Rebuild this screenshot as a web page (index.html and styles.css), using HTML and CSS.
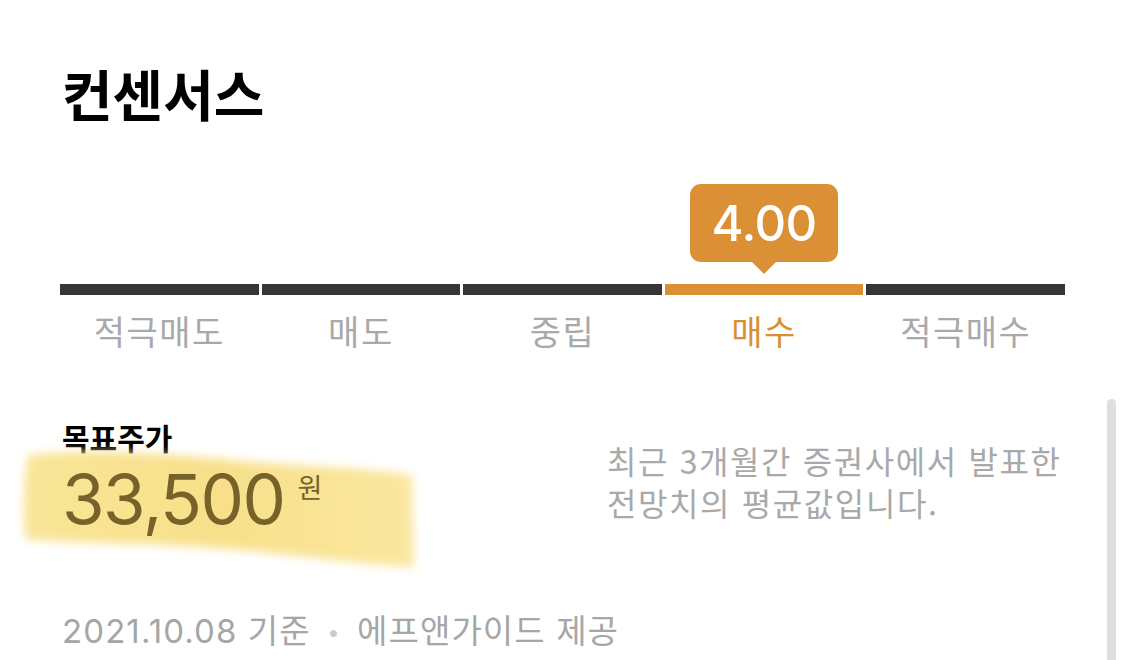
FILE: index.html
```html
<!DOCTYPE html>
<html lang="ko">
<head>
<meta charset="utf-8">
<link rel="stylesheet" href="styles.css">
</head>
<body>
<div class="page">
  <h1 class="title">컨센서스</h1>
  <div class="scale">
    <div class="tip-row">
      <div class="tip"><span>4.00</span></div>
    </div>
    <div class="bars">
      <div class="bar"></div>
      <div class="bar"></div>
      <div class="bar"></div>
      <div class="bar active"></div>
      <div class="bar"></div>
    </div>
    <div class="labels">
      <div class="label">적극매도</div>
      <div class="label">매도</div>
      <div class="label">중립</div>
      <div class="label active">매수</div>
      <div class="label">적극매수</div>
    </div>
  </div>
  <div class="target">
    <div class="target-left">
      <div class="target-title">목표주가</div>
      <div class="price-wrap">
        <svg class="highlight" width="440" height="150" viewBox="0 0 440 150" aria-hidden="true">
          <defs>
            <filter id="soft" x="-10%" y="-20%" width="120%" height="140%">
              <feGaussianBlur stdDeviation="5"/>
            </filter>
            <linearGradient id="hl" x1="0" y1="0" x2="1" y2="0">
              <stop offset="0" stop-color="#f9e598"/>
              <stop offset="0.5" stop-color="#f8e08a"/>
              <stop offset="1" stop-color="#fae7a0"/>
            </linearGradient>
          </defs>
          <path d="M28 16 C 90 10, 160 14, 240 22 C 320 28, 380 30, 412 36 L 414 128 C 360 126, 300 116, 230 110 C 150 104, 80 104, 26 101 C 22 70, 24 40, 28 16 Z" fill="url(#hl)" filter="url(#soft)"/>
        </svg>
        <span class="price">33,500</span><span class="unit">원</span>
      </div>
    </div>
    <p class="target-desc">최근 3개월간 증권사에서 발표한<br>전망치의 평균값입니다.</p>
  </div>
  <div class="source">2021.10.08 기준 <span class="dot">•</span> 에프앤가이드 제공</div>
</div>
<div class="scrollbar"></div>
</body>
</html>
```
FILE: styles.css
```css
* { box-sizing: border-box; }
html, body {
  margin: 0;
  padding: 0;
  background: #ffffff;
  overflow: hidden;
}
body {
  width: 1125px;
  height: 660px;
  position: relative;
  font-family: "Inter", "Noto Sans CJK KR", sans-serif;
}
.page {
  padding: 52px 60px 0 60px;
}
.title {
  margin: 0 0 0 2px;
  font-family: "Noto Sans CJK KR", sans-serif;
  font-weight: 700;
  font-size: 55px;
  line-height: 80px;
  color: #000;
  letter-spacing: 0;
}
.scale {
  margin-top: 52px;
  width: 1005px;
}
.tip-row {
  display: grid;
  grid-template-columns: repeat(5, 1fr);
  column-gap: 3px;
  height: 100px;
}
.tip {
  grid-column: 4;
  justify-self: center;
  position: relative;
  width: 148px;
  height: 78px;
  background: #db9035;
  border-radius: 11px;
  display: flex;
  align-items: center;
  justify-content: center;
}
.tip::after {
  content: "";
  position: absolute;
  left: 50%;
  bottom: -12px;
  margin-left: -13px;
  border-left: 13px solid transparent;
  border-right: 13px solid transparent;
  border-top: 13px solid #db9035;
}
.tip span {
  color: #fff;
  font-family: "Inter", sans-serif;
  font-size: 49px;
  font-weight: 500;
  letter-spacing: -0.5px;
}
.bars {
  display: grid;
  grid-template-columns: repeat(5, 1fr);
  column-gap: 3px;
}
.bar {
  height: 11px;
  background: #363636;
}
.bar.active { background: #db9035; }
.labels {
  display: grid;
  grid-template-columns: repeat(5, 1fr);
  column-gap: 3px;
  margin-top: 8px;
}
.label {
  text-align: center;
  font-family: "Noto Sans CJK KR", sans-serif;
  font-size: 34px;
  line-height: 56px;
  letter-spacing: 1.5px;
  color: #a9a9a9;
}
.label.active { color: #d98e33; }
.target {
  display: flex;
  margin-top: 58px;
  padding-left: 2px;
}
.target-left {
  width: 545px;
}
.target-title {
  font-family: "Noto Sans CJK KR", sans-serif;
  font-weight: 700;
  font-size: 30px;
  line-height: 40px;
  color: #000;
}
.price-wrap {
  position: relative;
  display: inline-block;
}
.highlight {
  position: absolute;
  left: -62px;
  top: -18px;
  z-index: 0;
}
.price {
  position: relative;
  z-index: 1;
  font-family: "Inter", sans-serif;
  font-size: 69px;
  line-height: 84px;
  color: #776229;
  letter-spacing: -1.5px;
}
.unit {
  position: relative;
  z-index: 1;
  font-family: "Noto Sans CJK KR", sans-serif;
  font-size: 27px;
  color: #776229;
  margin-left: 13px;
  vertical-align: 26px;
}
.target-desc {
  margin: 22px 0 0 0;
  font-family: "Noto Sans CJK KR", sans-serif;
  font-size: 32px;
  line-height: 42px;
  letter-spacing: 1.6px;
  color: #a9a9a9;
}
.source {
  margin-top: 70px;
  padding-left: 2px;
  font-family: "Inter", "Noto Sans CJK KR", sans-serif;
  font-size: 33px;
  line-height: 40px;
  letter-spacing: 1.1px;
  color: #a6a6a6;
}
.dot {
  color: #c9c9c9;
  font-size: 22px;
  margin: 0 6px;
  vertical-align: 3px;
}
.scrollbar {
  position: absolute;
  left: 1107px;
  top: 399px;
  width: 9px;
  height: 280px;
  background: #dfdfdf;
  border-radius: 5px 5px 0 0;
}
```
